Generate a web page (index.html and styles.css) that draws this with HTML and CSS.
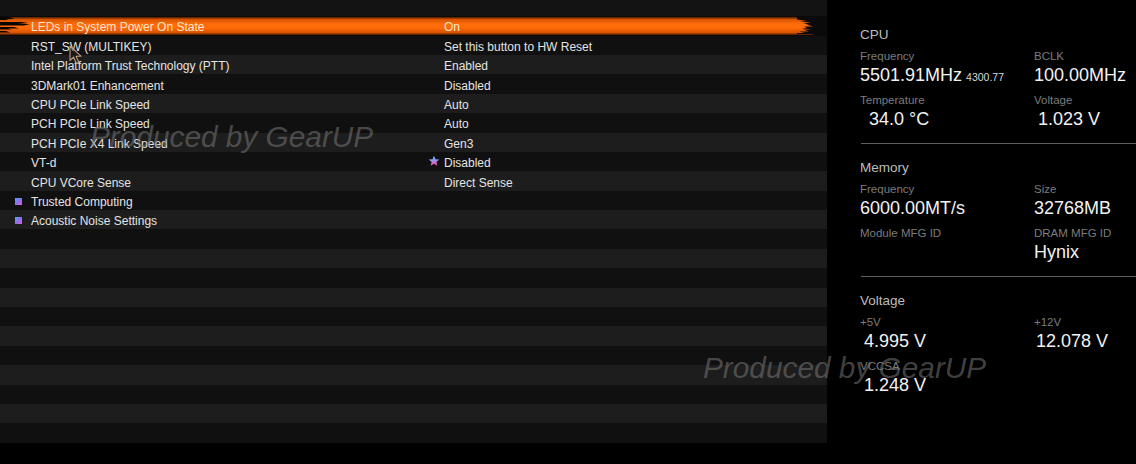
FILE: index.html
```html
<!DOCTYPE html>
<html lang="en">
<head>
<meta charset="utf-8">
<title>BIOS Settings</title>
<link rel="stylesheet" href="styles.css">
</head>
<body>
<div class="screen">
  <div class="list">
    <div class="top-strip"></div>
    <div class="row sel">
      <svg class="jag-left" width="34" height="19" viewBox="0 0 34 19"><path d="M0 1 H10 L14 3 H6 L9 4 H0 Z M0 6 H22 L28 7 L18 8 H30 L24 9.5 H0 Z M0 11 H14 L19 12.5 H8 L12 13.5 H0 Z M0 15 H6 L10 16.5 H0 Z" fill="#0b0502"/></svg>
      <span class="c-bul"></span><span class="c-lbl">LEDs in System Power On State</span><span class="c-ico"></span><span class="c-val">On</span>
      <svg class="jag-right" width="30" height="19" viewBox="0 0 30 19"><path d="M0 1 H30 V18 H0 V17 H8 L2 15.5 H12 L6 13.5 H14 L4 12 H10 L7 10.5 H16 L9 8.5 H12 L6 7 H14 L3 5 H10 L0 3.5 Z" fill="#0a0a0a"/></svg>
    </div>
    <div class="row odd"><span class="c-bul"></span><span class="c-lbl">RST_SW (MULTIKEY)</span><span class="c-ico"></span><span class="c-val">Set this button to HW Reset</span></div>
    <div class="row even"><span class="c-bul"></span><span class="c-lbl">Intel Platform Trust Technology (PTT)</span><span class="c-ico"></span><span class="c-val">Enabled</span></div>
    <div class="row odd"><span class="c-bul"></span><span class="c-lbl">3DMark01 Enhancement</span><span class="c-ico"></span><span class="c-val">Disabled</span></div>
    <div class="row even"><span class="c-bul"></span><span class="c-lbl">CPU PCIe Link Speed</span><span class="c-ico"></span><span class="c-val">Auto</span></div>
    <div class="row odd"><span class="c-bul"></span><span class="c-lbl">PCH PCIe Link Speed</span><span class="c-ico"></span><span class="c-val">Auto</span></div>
    <div class="row even"><span class="c-bul"></span><span class="c-lbl">PCH PCIe X4 Link Speed</span><span class="c-ico"></span><span class="c-val">Gen3</span></div>
    <div class="row odd"><span class="c-bul"></span><span class="c-lbl">VT-d</span><span class="c-ico">
      <svg width="12" height="12" viewBox="0 0 24 24"><defs><linearGradient id="sg" x1="0" y1="0" x2="0.2" y2="1"><stop offset="0" stop-color="#6ae4ff"/><stop offset="0.45" stop-color="#7fa0f5"/><stop offset="1" stop-color="#ff4fb0"/></linearGradient></defs><path d="M12 1.5 L15 8.6 L22.6 9.2 L16.8 14.2 L18.6 21.6 L12 17.6 L5.4 21.6 L7.2 14.2 L1.4 9.2 L9 8.6 Z" fill="url(#sg)"/></svg>
    </span><span class="c-val">Disabled</span></div>
    <div class="row even"><span class="c-bul"></span><span class="c-lbl">CPU VCore Sense</span><span class="c-ico"></span><span class="c-val">Direct Sense</span></div>
    <div class="row odd"><span class="c-bul"><i class="sq"></i></span><span class="c-lbl">Trusted Computing</span><span class="c-ico"></span><span class="c-val"></span></div>
    <div class="row even"><span class="c-bul"><i class="sq"></i></span><span class="c-lbl">Acoustic Noise Settings</span><span class="c-ico"></span><span class="c-val"></span></div>
    <div class="row odd"></div>
    <div class="row even"></div>
    <div class="row odd"></div>
    <div class="row even"></div>
    <div class="row odd"></div>
    <div class="row even"></div>
    <div class="row odd"></div>
    <div class="row even"></div>
    <div class="row odd"></div>
    <div class="row even"></div>
    <div class="row odd"></div>
  </div>

  <aside class="info">
    <section class="sec">
      <div class="sec-title">CPU</div>
      <div class="grid">
        <div class="cell"><div class="lbl">Frequency</div><div class="val">5501.91MHz<small>4300.77</small></div></div>
        <div class="cell"><div class="lbl">BCLK</div><div class="val">100.00MHz</div></div>
        <div class="cell"><div class="lbl">Temperature</div><div class="val ind2">34.0 °C</div></div>
        <div class="cell"><div class="lbl">Voltage</div><div class="val ind1">1.023 V</div></div>
      </div>
    </section>
    <hr class="sep">
    <section class="sec">
      <div class="sec-title">Memory</div>
      <div class="grid">
        <div class="cell"><div class="lbl">Frequency</div><div class="val">6000.00MT/s</div></div>
        <div class="cell"><div class="lbl">Size</div><div class="val">32768MB</div></div>
        <div class="cell"><div class="lbl">Module MFG ID</div><div class="val"></div></div>
        <div class="cell"><div class="lbl">DRAM MFG ID</div><div class="val">Hynix</div></div>
      </div>
    </section>
    <hr class="sep">
    <section class="sec">
      <div class="sec-title">Voltage</div>
      <div class="grid">
        <div class="cell"><div class="lbl">+5V</div><div class="val ind1">4.995 V</div></div>
        <div class="cell"><div class="lbl">+12V</div><div class="val ind0">12.078 V</div></div>
        <div class="cell"><div class="lbl">VCCSA</div><div class="val ind1">1.248 V</div></div>
        <div class="cell"></div>
      </div>
    </section>
  </aside>

  <div class="wm wm1">Produced by GearUP</div>
  <div class="wm wm2">Produced by GearUP</div>
  <svg class="cursor" width="16" height="20" viewBox="0 0 16 20"><path d="M1 1 L1 15.5 L4.6 12.2 L7.4 18.4 L9.8 17.3 L7.1 11.2 L12 11.2 Z" fill="rgba(40,30,25,0.55)" stroke="#b89a80" stroke-width="1.1" stroke-linejoin="round"/></svg>
</div>
</body>
</html>
```

FILE: styles.css
```css
* { box-sizing: border-box; }
html, body { margin: 0; padding: 0; background: #000; }
body { width: 1136px; height: 464px; overflow: hidden; font-family: "Liberation Sans", Arial, sans-serif; }

.screen { position: relative; display: flex; width: 1136px; height: 464px; background: #000; }

.list { width: 827px; flex: none; display: flex; flex-direction: column; }
.top-strip { height: 16.2px; background: #131313; }

.row {
  position: relative;
  height: 19.4px;
  padding-top: 3px;
  display: grid;
  grid-template-columns: 31px 397px 16px 1fr;
  align-items: center;
  font-size: 12px;
  line-height: 16px;
  color: #e4e4e4;
  white-space: nowrap;
}
.row.odd { background: #101010; }
.row.even { background: #1d1d1d; }

.row.sel { background: #0a0a0a; color: #ffe6cc; }
.row.sel::before {
  content: "";
  position: absolute;
  left: 0; right: 14px; top: 0.8px; bottom: 0.6px;
  background: linear-gradient(to bottom, #4a1a00 0%, #d85400 14%, #ff6d0c 40%, #ff6a06 62%, #d85400 86%, #4a1a00 100%);
}
.row.sel > span { position: relative; z-index: 1; }
.jag-left { position: absolute; left: 0; top: 0; z-index: 1; }
.jag-right { position: absolute; right: 0; top: 0; z-index: 1; }

.c-bul { display: flex; align-items: center; padding-left: 15px; }
.sq {
  display: block; width: 7px; height: 7px; margin-top: -1px;
  background: linear-gradient(135deg, #4aa8ff 0%, #8a70f0 50%, #f05ac8 100%);
}
.c-ico { display: flex; align-items: center; justify-content: flex-start; }
.c-ico svg { display: block; margin-top: -4px; }

.info { flex: 1; padding: 25px 0 0 33px; color: #f0f0f0; }
.sec-title { font-size: 13.5px; line-height: 20px; color: #bdbdbd; }
.grid { display: grid; grid-template-columns: 174px 1fr; row-gap: 4px; }
.lbl { margin-top: 2px; font-size: 11.5px; line-height: 18px; color: #7c7c7c; white-space: nowrap; }
.val { font-size: 18px; line-height: 20px; height: 20px; color: #f2f2f2; white-space: nowrap; }
.val small { font-size: 10.5px; color: #d8d8d8; margin-left: 4px; }
.ind0 { padding-left: 2px; }
.ind1 { padding-left: 4px; }
.ind2 { padding-left: 9px; }

.sep { margin: 14px 0 14px 1px; border: 0; height: 1px; background: #5e5e5e; }

.wm {
  position: absolute;
  font-family: "Liberation Sans", Arial, sans-serif;
  font-style: italic;
  font-size: 29.8px;
  line-height: 30px;
  color: rgba(120, 120, 120, 0.55);
  white-space: nowrap;
  pointer-events: none;
}
.wm1 { left: 90px; top: 122px; }
.wm2 { left: 703px; top: 353px; }

.cursor { position: absolute; left: 69px; top: 45px; }
```
